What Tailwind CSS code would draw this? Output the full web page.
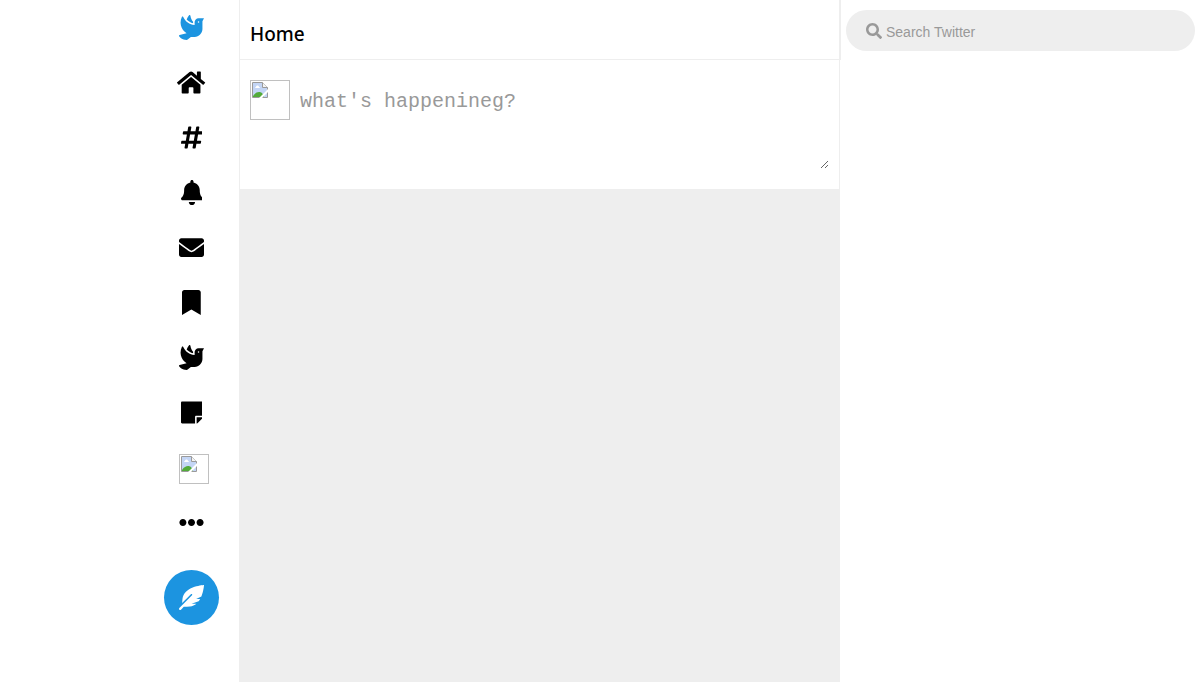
<!DOCTYPE html>
<html lang="en">

<head>
    <meta charset="UTF-8">
    <meta name="viewport" content="width=device-width, initial-scale=1.0">
    <title>Home / Twitter</title>
    <script src="https://cdn.jsdelivr.net/npm/@tailwindcss/browser@4"></script>
</head>

<body class="bg-white text-black font-['Noto_Sans',sans-serif]">
    <!-- broken image placeholder, shared by both avatars -->
    <svg class="hidden">
        <symbol id="broken-image" viewBox="0 0 16 16">
            <path fill="#c3d5f5" d="M1 1h10l5 5v9H1z" />
            <path fill="#fff" d="M3 6c0-1 1-1 1-1 0-2 3-2 3 0 1 0 1 1 1 1z" />
            <path fill="#53ab3a" d="M1 15v-1c2-3 4-4 6-4s4 1 5 5z" />
            <path fill="none" stroke="#9a9a9a" d="M.5 15.500V.5h10l5 5v10z" />
            <path fill="#f4f4f4" stroke="#9a9a9a" d="M10.500.5v5h5" />
            <path fill="#fff" d="M16 7v3l-6 6H7zM11 0h5v5z" />
        </symbol>
    </svg>

    <div class="flex min-h-screen">
        <nav class="w-1/5 flex flex-col items-end pr-5 border-r border-[#eee]">
            <a href="#" aria-label="Twitter" class="size-[55px] flex items-center justify-center text-[#1c94e0]">
                <svg class="h-[25px]" viewBox="0 0 512 512" fill="currentColor"><path d="M288 167.200v-28.100c-28.200-36.300-47.100-79.300-54.100-125.200-2.100-13.500-19-18.800-27.800-8.300-21.100 24.900-37.700 54.100-48.900 86.500 34.200 38.300 80 64.600 130.800 75.100zM400 64c-44.200 0-80 35.900-80 80.100v59.400C215.600 197.300 127 133 87 41.800c-5.500-12.500-23.200-13.200-29-.9C41.400 76 32 115.200 32 156.600c0 70.800 34.100 136.900 85.100 185.900 13.200 12.700 26.100 23.200 38.900 32.800l-143.900 36C1.400 414-3.400 426.400 2.600 435.700 20 462.600 63 508.200 155.800 512c8 .3 16-2.600 22.100-7.900l65.200-56.100H320c88.400 0 160-71.500 160-159.900V128l32-64H400zm0 96.100c-8.800 0-16-7.200-16-16s7.200-16 16-16 16 7.200 16 16-7.200 16-16 16z" /></svg>
            </a>
            <a href="#" aria-label="Home" class="size-[55px] flex items-center justify-center">
                <svg class="h-[25px]" viewBox="0 0 576 512" fill="currentColor"><path d="M280.370 148.260L96 300.110V464a16 16 0 0 0 16 16l112.060-.29a16 16 0 0 0 15.920-16V368a16 16 0 0 1 16-16h64a16 16 0 0 1 16 16v95.640a16 16 0 0 0 16 16.050L464 480a16 16 0 0 0 16-16V300L295.670 148.260a12.190 12.190 0 0 0-15.300 0zM571.600 251.470L488 182.560V44.050a12 12 0 0 0-12-12h-56a12 12 0 0 0-12 12v72.610L318.470 43a48 48 0 0 0-61 0L4.340 251.470a12 12 0 0 0-1.600 16.900l25.500 31A12 12 0 0 0 45.150 301l235.220-193.740a12.190 12.190 0 0 1 15.300 0L530.900 301a12 12 0 0 0 16.900-1.600l25.500-31a12 12 0 0 0-1.700-16.930z" /></svg>
            </a>
            <a href="#" aria-label="Explore" class="size-[55px] flex items-center justify-center">
                <svg class="h-[25px]" viewBox="0 0 448 512" fill="currentColor"><path d="M440.667 182.109l7.143-40c1.313-7.355-4.342-14.109-11.813-14.109h-74.810l14.623-81.891C377.123 38.754 371.468 32 363.997 32h-40.632a12 12 0 0 0-11.813 9.891L296.175 128H197.540l14.623-81.891C213.477 38.754 207.822 32 200.350 32h-40.632a12 12 0 0 0-11.813 9.891L132.528 128H53.432a12 12 0 0 0-11.813 9.891l-7.143 40C33.163 185.246 38.818 192 46.289 192h74.810L98.242 320H19.146a12 12 0 0 0-11.813 9.891l-7.143 40C-1.123 377.246 4.532 384 12.003 384h74.810L72.190 465.891C70.877 473.246 76.532 480 84.003 480h40.632a12 12 0 0 0 11.813-9.891L151.826 384h98.634l-14.623 81.891C234.523 473.246 240.178 480 247.650 480h40.632a12 12 0 0 0 11.813-9.891L315.472 384h79.096a12 12 0 0 0 11.813-9.891l7.143-40c1.313-7.355-4.342-14.109-11.813-14.109h-74.810l22.857-128h79.096a12 12 0 0 0 11.813-9.891zM261.889 320h-98.634l22.857-128h98.634l-22.857 128z" /></svg>
            </a>
            <a href="#" aria-label="Notifications" class="size-[55px] flex items-center justify-center">
                <svg class="h-[25px]" viewBox="0 0 448 512" fill="currentColor"><path d="M224 512c35.320 0 63.970-28.650 63.970-64H160.030c0 35.350 28.650 64 63.970 64zm215.390-149.710c-19.320-20.760-55.470-51.990-55.470-154.290 0-77.700-54.480-139.900-127.940-155.160V32c0-17.670-14.320-32-31.980-32s-31.980 14.330-31.980 32v20.840C118.560 68.100 64.080 130.300 64.080 208c0 102.300-36.150 133.530-55.470 154.290-6 6.450-8.660 14.160-8.610 21.710.11 16.400 12.980 32 32.100 32h383.800c19.120 0 32-15.600 32.100-32 .05-7.550-2.610-15.270-8.610-21.710z" /></svg>
            </a>
            <a href="#" aria-label="Messages" class="size-[55px] flex items-center justify-center">
                <svg class="h-[25px]" viewBox="0 0 512 512" fill="currentColor"><path d="M502.300 190.800c3.900-3.100 9.700-.2 9.700 4.700V400c0 26.500-21.500 48-48 48H48c-26.500 0-48-21.500-48-48V195.600c0-5 5.700-7.800 9.700-4.700 22.400 17.400 52.100 39.500 154.100 113.600 21.100 15.400 56.700 47.800 92.200 47.600 35.700.3 72-32.800 92.300-47.600 102-74.100 131.600-96.300 154-113.700zM256 320c23.200.4 56.600-29.200 73.400-41.400 132.700-96.300 142.800-104.700 173.400-128.700 5.800-4.500 9.200-11.500 9.200-18.900v-19c0-26.500-21.500-48-48-48H48c-26.500 0-48 21.500-48 48v19c0 7.400 3.400 14.300 9.200 18.900 30.600 23.900 40.700 32.400 173.400 128.700 16.800 12.200 50.200 41.800 73.400 41.400z" /></svg>
            </a>
            <a href="#" aria-label="Bookmarks" class="size-[55px] flex items-center justify-center">
                <svg class="h-[25px]" viewBox="0 0 384 512" fill="currentColor"><path d="M0 512V48C0 21.490 21.490 0 48 0h288c26.510 0 48 21.490 48 48v464L192 400 0 512z" /></svg>
            </a>
            <a href="#" aria-label="Topics" class="size-[55px] flex items-center justify-center">
                <svg class="h-[25px]" viewBox="0 0 512 512" fill="currentColor"><path d="M288 167.200v-28.100c-28.200-36.300-47.100-79.300-54.100-125.200-2.100-13.500-19-18.800-27.800-8.300-21.100 24.900-37.700 54.100-48.900 86.500 34.200 38.300 80 64.600 130.800 75.100zM400 64c-44.200 0-80 35.900-80 80.100v59.400C215.600 197.300 127 133 87 41.800c-5.500-12.500-23.200-13.200-29-.9C41.400 76 32 115.200 32 156.600c0 70.800 34.100 136.900 85.100 185.900 13.200 12.700 26.100 23.200 38.900 32.800l-143.900 36C1.400 414-3.400 426.400 2.600 435.700 20 462.600 63 508.200 155.800 512c8 .3 16-2.600 22.100-7.900l65.200-56.100H320c88.400 0 160-71.500 160-159.900V128l32-64H400zm0 96.100c-8.800 0-16-7.200-16-16s7.200-16 16-16 16 7.200 16 16-7.200 16-16 16z" /></svg>
            </a>
            <a href="#" aria-label="Lists" class="size-[55px] flex items-center justify-center">
                <svg class="h-[25px]" viewBox="0 0 448 512" fill="currentColor"><path d="M312 320h136V56c0-13.300-10.700-24-24-24H24C10.700 32 0 42.700 0 56v400c0 13.300 10.700 24 24 24h264V344c0-13.200 10.800-24 24-24zm129 55l-98 98c-4.500 4.500-10.600 7-17 7h-6V352h128v6.100c0 6.300-2.500 12.400-7 16.900z" /></svg>
            </a>
            <a href="#" aria-label="Profile" class="size-[55px] pt-[14px] pl-[15px]">
                <span class="block size-[30px] border border-[#c0c0c0] p-px">
                    <svg class="size-4"><use href="#broken-image" /></svg>
                </span>
            </a>
            <a href="#" aria-label="More" class="size-[55px] flex items-center justify-center">
                <svg class="h-[25px]" viewBox="0 0 512 512" fill="currentColor"><path d="M328 256c0 39.800-32.200 72-72 72s-72-32.200-72-72 32.200-72 72-72 72 32.200 72 72zm104-72c-39.800 0-72 32.200-72 72s32.200 72 72 72 72-32.200 72-72-32.200-72-72-72zm-352 0c-39.800 0-72 32.200-72 72s32.200 72 72 72 72-32.200 72-72-32.200-72-72-72z" /></svg>
            </a>
            <button type="button" aria-label="Tweet" class="size-[55px] mt-5 flex items-center justify-center rounded-full bg-[#1c94e0] text-white">
                <svg class="h-[25px]" viewBox="0 0 512 512" fill="currentColor"><path d="M512 0C460.220 3.560 96.440 38.200 71.010 287.610c-3.090 26.660-4.840 53.440-5.990 80.240l178.870-178.690c6.250-6.250 16.400-6.250 22.650 0s6.250 16.380 0 22.630L7.040 471.030c-9.380 9.370-9.380 24.570 0 33.940 9.380 9.370 24.600 9.370 33.980 0l57.130-57.070c42.090-.14 84.150-2.530 125.960-7.360 53.480-5.440 97.020-26.470 132.580-56.540H255.740l146.790-48.880c11.250-14.890 21.370-30.710 30.450-47.120h-81.140l106.540-53.210C500.290 132.860 510.190 26.260 512 0z" /></svg>
            </button>
        </nav>

        <main class="w-1/2 bg-[#eee] border-r border-[#eee]">
            <header class="h-[60px] flex items-end px-[10px] pb-3 bg-white border-b border-[#eee]">
                <h1 class="text-[19px] leading-[26px] font-medium">Home</h1>
            </header>
            <form class="flex items-start gap-[10px] px-[10px] pt-5 pb-5 bg-white">
                <span class="size-10 shrink-0 border border-[#c0c0c0] p-px">
                    <svg class="size-4"><use href="#broken-image" /></svg>
                </span>
                <textarea aria-label="Tweet text" placeholder="what's happenineg?"
                    class="block flex-1 h-[89px] py-[10px] resize outline-none text-xl leading-[23px] placeholder:text-[#999] font-['Courier_New','Liberation_Mono',monospace]"></textarea>
            </form>
        </main>

        <aside class="w-[30%]">
            <div class="h-[60px] pt-[10px] px-[5px] border-l border-[#eee]">
                <label class="h-[41px] flex items-center gap-1 px-5 rounded-full bg-[#eee] text-[#999]">
                    <svg class="size-4 shrink-0" viewBox="0 0 512 512" fill="currentColor"><path d="M505 442.700L405.300 343c-4.500-4.500-10.600-7-17-7H372c27.600-35.300 44-79.700 44-128C416 93.100 322.900 0 208 0S0 93.100 0 208s93.100 208 208 208c48.300 0 92.700-16.400 128-44v16.300c0 6.400 2.500 12.500 7 17l99.700 99.700c9.400 9.400 24.600 9.400 33.900 0l28.300-28.300c9.400-9.400 9.400-24.600.1-34zM208 336c-70.700 0-128-57.200-128-128 0-70.700 57.200-128 128-128 70.700 0 128 57.200 128 128 0 70.700-57.200 128-128 128z" /></svg>
                    <input type="text" aria-label="Search Twitter" placeholder="Search Twitter"
                        class="flex-1 min-w-0 pt-0.5 outline-none text-sm placeholder:text-[#999] font-['Liberation_Sans',sans-serif]">
                </label>
            </div>
        </aside>
    </div>
</body>

</html>
